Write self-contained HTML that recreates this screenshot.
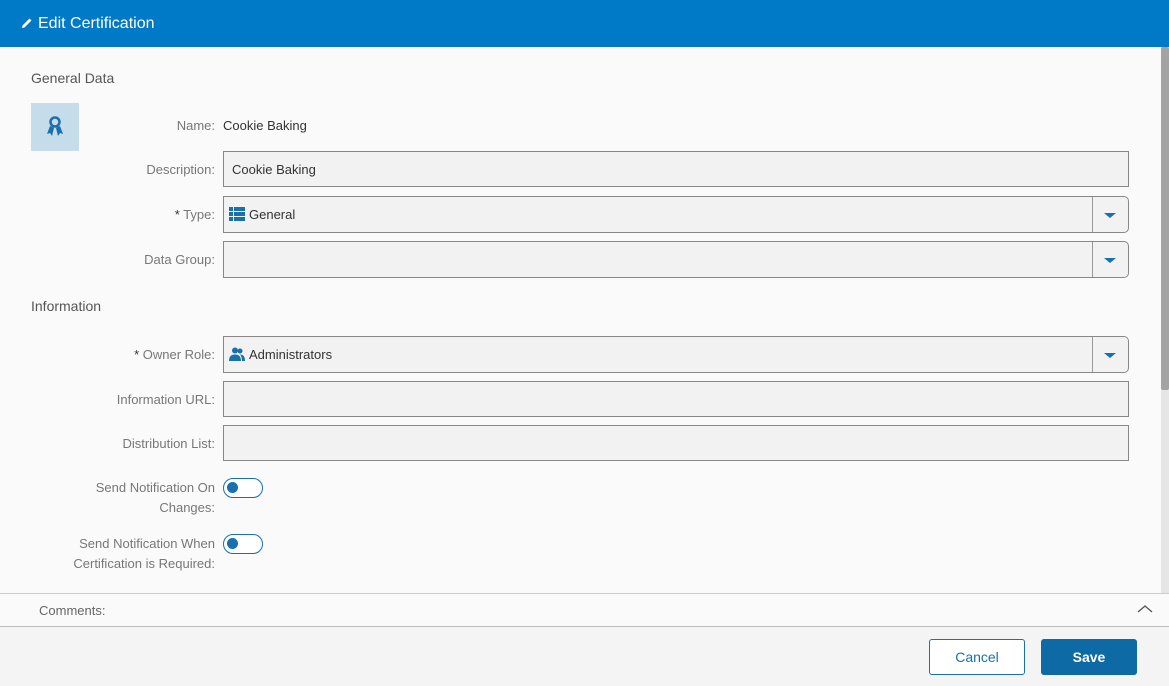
<!DOCTYPE html>
<html><head><meta charset="utf-8"><style>
*{box-sizing:border-box;margin:0;padding:0}
body{width:1169px;height:686px;overflow:hidden;background:#fafafa;font-family:"Liberation Sans",sans-serif;font-size:13px;color:#333;position:relative}
.hdr{position:absolute;left:0;top:0;width:1169px;height:47px;background:#0079c6;color:#fff;font-size:16px;line-height:47px;padding-left:21px}
.abs{position:absolute}
.sec{position:absolute;left:31px;font-size:14px;color:#555}
.lbl{position:absolute;right:954px;text-align:right;color:#777;font-size:13px;line-height:20px;margin-top:1px}
.box{position:absolute;left:223px;width:906px;border:1px solid #888;background:#f2f2f2;font-size:13px;padding-left:8px}
.dd{border-radius:0 5px 5px 0}
.dd .sep{position:absolute;right:35px;top:0;bottom:0;border-left:1px solid #999}
.dd .arr{position:absolute;right:12px;top:50%;margin-top:-2px;width:0;height:0;border-left:6px solid transparent;border-right:6px solid transparent;border-top:5px solid #1a6fae}
.tg{position:absolute;left:223px;width:40px;height:20px;border:1.5px solid #1a6fae;border-radius:10px;background:#fff}
.tg:after{content:"";position:absolute;left:3px;top:3px;width:11px;height:11px;border-radius:50%;background:#1a6fae}
.btn{position:absolute;top:639px;width:96px;height:36px;border-radius:3px;font-size:14px;text-align:center;line-height:34px}
</style></head><body>
<div class="hdr"><svg width="12" height="12" viewBox="0 0 12 12" style="margin-right:5px;vertical-align:-1px"><path d="M1 11 L1.5 8.5 L8.5 1.5 L10.5 3.5 L3.5 10.5 Z" fill="#fff"/></svg>Edit Certification</div>
<div class="abs" style="left:1161px;top:47px;width:8px;height:546px;background:#e6e6e6"></div>
<div class="abs" style="left:1161px;top:47px;width:8px;height:343px;background:#a3a3a3;border-radius:2px"></div>
<div class="sec" style="top:70px">General Data</div>
<div class="abs" style="left:31px;top:103px;width:48px;height:48px;background:#c5dcea">
<svg width="48" height="48" viewBox="0 0 48 48"><circle cx="24" cy="19" r="4.5" fill="none" stroke="#1a6fae" stroke-width="2.5"/><path d="M19 23 L16 31 L19 30 L21 33 L23 25 Z M29 23 L32 31 L29 30 L27 33 L25 25 Z" fill="#1a6fae"/></svg></div>
<div class="lbl" style="top:115px">Name:</div>
<div class="abs" style="left:223px;top:116px;line-height:20px">Cookie Baking</div>
<div class="lbl" style="top:159px">Description:</div>
<div class="box" style="top:151px;height:36px;line-height:35px">Cookie Baking</div>
<div class="lbl" style="top:204px"><span style="color:#333">*</span> Type:</div>
<div class="box dd" style="top:196px;height:37px;line-height:35px;padding-left:5px"><svg width="16" height="14" viewBox="0 0 16 14" style="vertical-align:-2px;margin-right:4px"><path d="M0 0h4v4H0zM5 0h11v4H5zM0 5h4v4H0zM5 5h11v4H5zM0 10h4v4H0zM5 10h11v4H5z" fill="#1a6fae"/></svg>General<div class="sep"></div><div class="arr"></div></div>
<div class="lbl" style="top:249px">Data Group:</div>
<div class="box dd" style="top:241px;height:37px"><div class="sep"></div><div class="arr"></div></div>
<div class="sec" style="top:298px">Information</div>
<div class="lbl" style="top:344px"><span style="color:#333">*</span> Owner Role:</div>
<div class="box dd" style="top:336px;height:37px;line-height:35px;padding-left:5px"><svg width="16" height="14" viewBox="0 0 16 14" style="vertical-align:-2px;margin-right:4px"><circle cx="6" cy="3.5" r="3" fill="#1a6fae"/><circle cx="11" cy="4" r="2.5" fill="#1a6fae"/><path d="M0 14 Q0 7.5 6 7.5 Q12 7.5 12 14Z M11 7.5 Q16 7.5 16 14 H13 Q13 10 11 7.5Z" fill="#1a6fae"/></svg>Administrators<div class="sep"></div><div class="arr"></div></div>
<div class="lbl" style="top:389px">Information URL:</div>
<div class="box" style="top:381px;height:36px"></div>
<div class="lbl" style="top:433px">Distribution List:</div>
<div class="box" style="top:425px;height:36px"></div>
<div class="lbl" style="top:477px">Send Notification On<br>Changes:</div>
<div class="tg" style="top:478px"></div>
<div class="lbl" style="top:533px">Send Notification When<br>Certification is Required:</div>
<div class="tg" style="top:534px"></div>
<div class="abs" style="left:0;top:593px;width:1169px;height:34px;border-top:1px solid #ccc;border-bottom:1px solid #bbb;background:#fafafa"></div>
<div class="abs" style="left:39px;top:602px;color:#666;line-height:18px">Comments:</div>
<svg class="abs" style="left:1137px;top:604px" width="16" height="10" viewBox="0 0 16 10"><path d="M1 8 L8 2 L15 8" fill="none" stroke="#555" stroke-width="1.3"/></svg>
<div class="abs" style="left:0;top:627px;width:1169px;height:59px;background:#f4f4f4"></div>
<div class="btn" style="left:929px;border:1px solid #1a6fae;color:#1a6fae;background:#fff">Cancel</div>
<div class="btn" style="left:1041px;background:#0e6aa5;color:#fff;font-weight:bold;line-height:36px">Save</div>
</body></html>
